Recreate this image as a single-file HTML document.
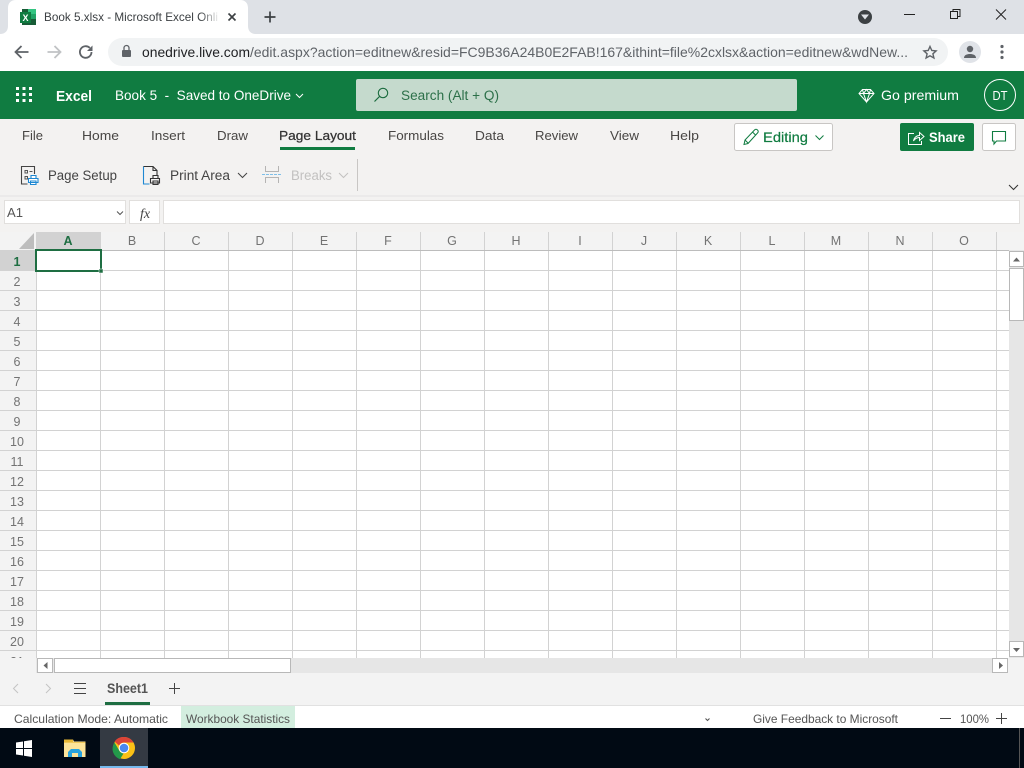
<!DOCTYPE html>
<html><head><meta charset="utf-8"><title>Book 5.xlsx - Microsoft Excel Online</title>
<style>
html,body{margin:0;padding:0;width:1024px;height:768px;overflow:hidden;background:#fff}
svg{display:block}
text{font-family:"Liberation Sans",sans-serif;font-size:13px;fill:#444;white-space:pre}
.hd{font-size:12.5px;fill:#737373;text-anchor:middle}
.rn{font-size:12.5px;fill:#737373;text-anchor:middle}
.tab{font-size:13px;fill:#484644}
</style></head><body>
<svg width="1024" height="768" viewBox="0 0 1024 768" xmlns="http://www.w3.org/2000/svg">
<defs><linearGradient id="fade" x1="0" x2="1"><stop offset="0" stop-color="#fff" stop-opacity="0"/><stop offset="1" stop-color="#fff"/></linearGradient></defs>
<!-- Chrome tab strip -->
<rect width="1024" height="34" fill="#dee1e6"/>
<path d="M0 34C5 34 8 31 8 26V8C8 3 11 0 16 0H240C245 0 248 3 248 8V26C248 31 251 34 256 34Z" fill="#fff"/>
<rect x="22" y="9" width="14" height="16" fill="#185c37"/><rect x="28" y="9" width="8" height="5" fill="#33c481"/><rect x="28" y="14" width="8" height="5" fill="#21a366"/><rect x="20" y="12" width="11" height="11" fill="#107c41"/>
<text x="22.5" y="21" style="font-size:9px;font-weight:bold;fill:#fff">X</text>
<text x="44" y="21" textLength="174" lengthAdjust="spacingAndGlyphs" style="font-size:12px;fill:#3c4043">Book 5.xlsx - Microsoft Excel Onli</text>
<rect x="200" y="8" width="20" height="18" fill="url(#fade)"/>
<path d="M228.500 13.500l7 7m0-7l-7 7" stroke="#3c4043" stroke-width="1.600" fill="none"/>
<path d="M270 11.500v11M264.500 17h11" stroke="#3c4043" stroke-width="1.700" fill="none"/>
<circle cx="865" cy="17" r="7" fill="#3c4043"/><path d="M861 14.500h8l-4 5z" fill="#dee1e6"/>
<path d="M904 14.500h11" stroke="#222" stroke-width="1"/>
<path d="M953 11.500v-2h7v7h-2.500" fill="none" stroke="#222"/><rect x="950.500" y="11.500" width="7" height="7" fill="#dee1e6" stroke="#222"/>
<path d="M996 9.500l10 10m0-10l-10 10" stroke="#222" stroke-width="1" fill="none"/>
<!-- Chrome toolbar -->
<rect y="34" width="1024" height="37" fill="#fff"/>
<path d="M28.500 52H16.500M21.500 46l-6 6 6 6" fill="none" stroke="#5f6368" stroke-width="1.800"/>
<path d="M47.500 52h12M54.500 46l6 6-6 6" fill="none" stroke="#c0c2c5" stroke-width="1.800"/>
<path d="M91.500 52a5.800 5.800 0 1 1-1.700-4.100" fill="none" stroke="#5f6368" stroke-width="1.800"/><path d="M92.500 45.500v5.500h-5.500z" fill="#5f6368"/>
<rect x="108" y="38" width="840" height="28" rx="14" fill="#f1f3f4"/>
<rect x="122" y="50" width="9" height="7" rx="1" fill="#5f6368"/><path d="M124 50v-2a2.500 2.500 0 0 1 5 0v2" fill="none" stroke="#5f6368" stroke-width="1.300"/>
<text x="142" y="57" textLength="108" lengthAdjust="spacingAndGlyphs" style="font-size:14px;fill:#202124">onedrive.live.com</text>
<text x="250" y="57" textLength="658" lengthAdjust="spacingAndGlyphs" style="font-size:14px;fill:#5f6368">/edit.aspx?action=editnew&amp;resid=FC9B36A24B0E2FAB!167&amp;ithint=file%2cxlsx&amp;action=editnew&amp;wdNew...</text>
<path d="M930 46.500l1.800 4 4.300.4-3.200 2.900 1 4.200-3.900-2.200-3.900 2.200 1-4.200-3.200-2.900 4.300-.4z" fill="none" stroke="#5f6368" stroke-width="1.400"/>
<circle cx="970" cy="52" r="11" fill="#e0e3e8"/><circle cx="970" cy="49" r="3.200" fill="#5f6368"/><path d="M964 58c0-3 3-4 6-4s6 1 6 4z" fill="#5f6368"/>
<circle cx="1002" cy="46.500" r="1.600" fill="#5f6368"/><circle cx="1002" cy="52" r="1.600" fill="#5f6368"/><circle cx="1002" cy="57.500" r="1.600" fill="#5f6368"/>
<!-- Excel header -->
<rect y="71" width="1024" height="48" fill="#107c41"/>
<g fill="#fff"><rect x="16" y="87" width="3" height="3"/><rect x="22.500" y="87" width="3" height="3"/><rect x="29" y="87" width="3" height="3"/><rect x="16" y="93" width="3" height="3"/><rect x="22.500" y="93" width="3" height="3"/><rect x="29" y="93" width="3" height="3"/><rect x="16" y="99" width="3" height="3"/><rect x="22.500" y="99" width="3" height="3"/><rect x="29" y="99" width="3" height="3"/></g>
<text x="56" y="101" textLength="36" lengthAdjust="spacingAndGlyphs" style="font-size:15px;font-weight:bold;fill:#fff">Excel</text>
<text x="115" y="100" textLength="176" lengthAdjust="spacingAndGlyphs" style="font-size:14px;fill:#fff">Book 5  -  Saved to OneDrive</text>
<path d="M296 94l3.500 3.500 3.500-3.500" fill="none" stroke="#fff"/>
<rect x="356" y="79" width="441" height="32" rx="2" fill="#c5dacd"/>
<circle cx="383" cy="93" r="4.700" fill="none" stroke="#1b6b3e" stroke-width="1.100"/><path d="M379.500 96.500l-5 5" stroke="#1b6b3e" stroke-width="1.200"/>
<text x="401" y="100" textLength="98" lengthAdjust="spacingAndGlyphs" style="font-size:13.500px;fill:#2c7049">Search (Alt + Q)</text>
<path d="M862.500 89.500h8l3.500 4-7.500 8.500-7.500-8.500zM859 93.500h15M863.500 93.500l3 8.500 3-8.500M862.500 89.500l1 4 3-4 3 4 1-4" fill="none" stroke="#fff" stroke-width="1"/>
<text x="881" y="100" textLength="78" lengthAdjust="spacingAndGlyphs" style="font-size:14px;fill:#fff">Go premium</text>
<circle cx="1000" cy="95" r="15.500" fill="none" stroke="#fff"/>
<text x="992.500" y="100" textLength="15" lengthAdjust="spacingAndGlyphs" style="font-size:12.500px;fill:#fff">DT</text>
<!-- Ribbon -->
<rect y="119" width="1024" height="76" fill="#f3f2f1"/>
<rect y="195" width="1024" height="5" fill="#ebeaea"/>
<rect y="197" width="1024" height="35" fill="#f3f2f1"/>
<text class="tab" x="22" y="140" textLength="21" lengthAdjust="spacingAndGlyphs">File</text>
<text class="tab" x="82" y="140" textLength="37" lengthAdjust="spacingAndGlyphs">Home</text>
<text class="tab" x="151" y="140" textLength="34" lengthAdjust="spacingAndGlyphs">Insert</text>
<text class="tab" x="217" y="140" textLength="31" lengthAdjust="spacingAndGlyphs">Draw</text>
<text class="tab" x="279" y="140" textLength="77" lengthAdjust="spacingAndGlyphs" style="fill:#333;stroke:#333;stroke-width:.25">Page Layout</text>
<rect x="280" y="147" width="75" height="3" fill="#107c41"/>
<text class="tab" x="388" y="140" textLength="56" lengthAdjust="spacingAndGlyphs">Formulas</text>
<text class="tab" x="475" y="140" textLength="29" lengthAdjust="spacingAndGlyphs">Data</text>
<text class="tab" x="535" y="140" textLength="43" lengthAdjust="spacingAndGlyphs">Review</text>
<text class="tab" x="610" y="140" textLength="29" lengthAdjust="spacingAndGlyphs">View</text>
<text class="tab" x="670" y="140" textLength="29" lengthAdjust="spacingAndGlyphs">Help</text>
<rect x="734.500" y="123.500" width="98" height="27" rx="2" fill="#fff" stroke="#c8c6c4"/>
<path d="M744 144.500l1-4.500 9.500-10c1-1 2-1 3 0s1 2 0 3l-9.500 10.500zM745 140l3 3M752.500 132l3 3" fill="none" stroke="#107c41" stroke-width="1"/>
<text x="763" y="142" textLength="45" lengthAdjust="spacingAndGlyphs" style="font-size:14px;fill:#107c41;stroke:#107c41;stroke-width:.2">Editing</text>
<path d="M815.500 135.500l4 4 4-4" fill="none" stroke="#107c41" stroke-width="1"/>
<rect x="900" y="123" width="74" height="28" rx="2" fill="#107c41"/>
<path d="M914 133.500h-5.500v11h13v-3.500M913.500 141c.5-3.500 3-5.500 6-5.500v-3l4.500 4-4.500 4v-3c-2.500 0-4.500 1-6 3.500z" fill="none" stroke="#fff" stroke-width="1"/>
<text x="929" y="142" textLength="36" lengthAdjust="spacingAndGlyphs" style="font-size:14px;font-weight:bold;fill:#fff">Share</text>
<rect x="982.500" y="123.500" width="33" height="27" rx="2" fill="#fff" stroke="#c8c6c4"/>
<path d="M992.500 131.500h13v9.500h-9l-2.500 3v-3h-1.500z" fill="none" stroke="#107c41" stroke-width="1.100"/>
<!-- Ribbon commands -->
<path d="M34.500 174v-7.500H21.500v17.500h6" fill="none" stroke="#444" stroke-width="1.100"/>
<path d="M25 170.500h2.500v2.500H25zM25 176.500h2.500v2.500H25zM29.500 171.500h3" fill="none" stroke="#555"/>
<path d="M31 175.500h5v3h-5zM28.500 178.500h9.500v4h-9.500zM30.500 181h5.500v3.500h-5.500z" fill="#fff" stroke="#1e88d2" stroke-width="1.100"/>
<text x="48" y="180" textLength="69" lengthAdjust="spacingAndGlyphs" style="font-size:13.500px;fill:#444">Page Setup</text>
<path d="M143.500 166.500v17.500h6" fill="none" stroke="#1e88d2" stroke-width="1.100"/><path d="M143.500 166.500h9.500l4 4v4.500M153 166.500v4h4" fill="none" stroke="#333" stroke-width="1.100"/>
<path d="M153 175.500h5v3h-5zM150.500 178.500h9v4.500h-9zM153 181h5v3.500h-5z" fill="#f3f2f1" stroke="#333" stroke-width="1.100"/>
<text x="170" y="180" textLength="60" lengthAdjust="spacingAndGlyphs" style="font-size:13.500px;fill:#444">Print Area</text>
<path d="M238 173l4.500 4.500 4.500-4.500" fill="none" stroke="#444"/>
<path d="M265.500 166v5.500h13V166M265.500 183v-5.500h13v5.500" fill="none" stroke="#b5b4b3" stroke-width="1"/>
<path d="M262 174.500h19" stroke="#7fbfe8" stroke-width="1" stroke-dasharray="3 1"/>
<text x="291" y="180" textLength="41" lengthAdjust="spacingAndGlyphs" style="font-size:13.500px;fill:#c2c1c0">Breaks</text>
<path d="M339 173l4.500 4.500 4.500-4.500" fill="none" stroke="#c2c1c0"/>
<rect x="357" y="159" width="1" height="32" fill="#c8c6c4"/>
<path d="M1009 185l4.500 4.500 4.500-4.500" fill="none" stroke="#333"/>
<!-- Formula bar -->
<rect x="4.500" y="200.500" width="121" height="23" fill="#fff" stroke="#e1dfdd"/>
<text x="7" y="217" textLength="16" lengthAdjust="spacingAndGlyphs" style="font-size:13px;fill:#555">A1</text>
<path d="M117 211.500l3 3 3-3" fill="none" stroke="#555"/>
<rect x="129.500" y="200.500" width="30" height="23" fill="#fff" stroke="#e1dfdd"/>
<text x="140" y="218" style="font-family:'Liberation Serif',serif;font-style:italic;font-size:14px;fill:#444">fx</text>
<rect x="163.500" y="200.500" width="856" height="23" fill="#fff" stroke="#e1dfdd"/>
<!-- Grid -->
<rect y="232" width="1024" height="18" fill="#f3f3f3"/>
<rect y="250" width="36" height="408" fill="#f3f3f3"/>
<rect x="36" y="250" width="973" height="408" fill="#fff"/>
<rect x="36" y="232" width="65" height="18" fill="#d2d2d2"/>
<rect y="250" width="36" height="21" fill="#d2d2d2"/>
<path d="M34 233v16H19z" fill="#bdbdbd"/>
<path fill="none" stroke="#d2d2d2" stroke-width="1" d="M36.500 250V658M100.500 232V658M164.500 232V658M228.500 232V658M292.500 232V658M356.500 232V658M420.500 232V658M484.500 232V658M548.500 232V658M612.500 232V658M676.500 232V658M740.500 232V658M804.500 232V658M868.500 232V658M932.500 232V658M996.500 232V658"/>
<path fill="none" stroke="#d2d2d2" stroke-width="1" d="M0 270.500H1009M0 290.500H1009M0 310.500H1009M0 330.500H1009M0 350.500H1009M0 370.500H1009M0 390.500H1009M0 410.500H1009M0 430.500H1009M0 450.500H1009M0 470.500H1009M0 490.500H1009M0 510.500H1009M0 530.500H1009M0 550.500H1009M0 570.500H1009M0 590.500H1009M0 610.500H1009M0 630.500H1009M0 650.500H1009"/>
<path d="M36 250.500H1009" stroke="#bcbcbc"/>
<text class="hd" x="68" y="245" style="font-weight:bold;fill:#1e6e42">A</text>
<text class="hd" x="132" y="245">B</text><text class="hd" x="196" y="245">C</text><text class="hd" x="260" y="245">D</text><text class="hd" x="324" y="245">E</text><text class="hd" x="388" y="245">F</text><text class="hd" x="452" y="245">G</text><text class="hd" x="516" y="245">H</text><text class="hd" x="580" y="245">I</text><text class="hd" x="644" y="245">J</text><text class="hd" x="708" y="245">K</text><text class="hd" x="772" y="245">L</text><text class="hd" x="836" y="245">M</text><text class="hd" x="900" y="245">N</text><text class="hd" x="964" y="245">O</text>
<text class="rn" x="17" y="266" style="font-weight:bold;fill:#1e6e42">1</text>
<text class="rn" x="17" y="286">2</text><text class="rn" x="17" y="306">3</text><text class="rn" x="17" y="326">4</text><text class="rn" x="17" y="346">5</text><text class="rn" x="17" y="366">6</text><text class="rn" x="17" y="386">7</text><text class="rn" x="17" y="406">8</text><text class="rn" x="17" y="426">9</text><text class="rn" x="17" y="446">10</text><text class="rn" x="17" y="466">11</text><text class="rn" x="17" y="486">12</text><text class="rn" x="17" y="506">13</text><text class="rn" x="17" y="526">14</text><text class="rn" x="17" y="546">15</text><text class="rn" x="17" y="566">16</text><text class="rn" x="17" y="586">17</text><text class="rn" x="17" y="606">18</text><text class="rn" x="17" y="626">19</text><text class="rn" x="17" y="646">20</text><text class="rn" x="17" y="666">21</text>
<rect x="36" y="250" width="65" height="21" fill="none" stroke="#1e6e42" stroke-width="2"/>
<rect x="99" y="269" width="4" height="4" fill="#1e6e42" stroke="#fff" stroke-width=".5"/>
<!-- Scrollbars -->
<rect x="1009" y="250" width="15" height="408" fill="#e6e6e6"/>
<rect x="1009.500" y="251.500" width="14" height="15" fill="#fff" stroke="#b8b8b8"/>
<path d="M1013 261.500l3.500-4 3.500 4z" fill="#666"/>
<rect x="1009.500" y="268.500" width="14" height="52" fill="#fff" stroke="#b8b8b8"/>
<rect x="1009.500" y="641.500" width="14" height="15" fill="#fff" stroke="#b8b8b8"/>
<path d="M1013 648l3.500 4 3.500-4z" fill="#666"/>
<rect y="658" width="36" height="15" fill="#f3f3f3"/>
<rect x="36" y="658" width="973" height="15" fill="#e6e6e6"/>
<rect x="37.500" y="658.500" width="15" height="14" fill="#fff" stroke="#b8b8b8"/>
<path d="M47.500 662l-4 3.500 4 3.500z" fill="#666"/>
<rect x="54.500" y="658.500" width="236" height="14" fill="#fff" stroke="#b8b8b8"/>
<rect x="992.500" y="658.500" width="15" height="14" fill="#fff" stroke="#b8b8b8"/>
<path d="M999 662l4 3.500-4 3.500z" fill="#666"/>
<!-- Sheet tabs -->
<rect y="673" width="1024" height="32" fill="#f3f3f3"/>
<rect x="1008" y="658" width="16" height="15" fill="#f3f3f3"/>
<path d="M18 684l-4.500 4.500 4.500 4.500M46 684l4.500 4.500-4.500 4.500" fill="none" stroke="#c4c4c4"/>
<path d="M74 683.500h12M74 688.500h12M74 693.500h12" stroke="#444"/>
<text x="107" y="693" textLength="41" lengthAdjust="spacingAndGlyphs" style="font-size:13.500px;font-weight:bold;fill:#555">Sheet1</text>
<rect x="105" y="702" width="45" height="3" fill="#1e6e42"/>
<path d="M174.500 683v11M169 688.500h11" stroke="#444"/>
<path d="M0 705.500H1024" stroke="#e1e1e1"/>
<!-- Status bar -->
<rect y="706" width="1024" height="22" fill="#fff"/>
<text x="14" y="723" textLength="154" lengthAdjust="spacingAndGlyphs" style="font-size:12px;fill:#555">Calculation Mode: Automatic</text>
<rect x="181" y="706" width="114" height="22" fill="#d3eedf"/>
<text x="186" y="723" textLength="104" lengthAdjust="spacingAndGlyphs" style="font-size:12px;fill:#555">Workbook Statistics</text>
<path d="M705.500 718.500l2 2 2-2" fill="none" stroke="#555" stroke-width="1.100"/>
<text x="753" y="723" textLength="145" lengthAdjust="spacingAndGlyphs" style="font-size:12px;fill:#555">Give Feedback to Microsoft</text>
<path d="M940 718.500h11M996 718.500h11M1001.500 713v11" stroke="#444"/>
<text x="960" y="723" textLength="29" lengthAdjust="spacingAndGlyphs" style="font-size:12px;fill:#555">100%</text>
<!-- Taskbar -->
<rect y="728" width="1024" height="40" fill="#010a14"/>
<path d="M16 742.500l7-1v6.500h-7zM24 741.300l8-1.300v8h-8zM16 749h7v6.500l-7-1zM24 749h8v8l-8-1.300z" fill="#fff"/>
<path d="M64 739.500h9l1 2h11.500v15.500H64z" fill="#fde49a"/><path d="M64 739.500h9v2.500h-9z" fill="#e8b836"/><path d="M64 742h21.500v1H64z" fill="#f0c85a"/>
<path d="M68 757v-5l3-3h8l3 3v5h-4v-4h-6v4z" fill="#29a3dd"/>
<rect x="100" y="728" width="48" height="40" fill="#343a43"/>
<rect x="100" y="766" width="48" height="2" fill="#76b9ed"/>
<circle cx="124" cy="748" r="11" fill="#fbc116"/>
<path d="M124 737a11 11 0 0 1 9.500 5.500H124a5.500 5.500 0 0 0-5 3l-4.500-4A11 11 0 0 1 124 737z" fill="#db4437"/>
<path d="M114.500 742.500l5 8.500a5.500 5.500 0 0 0 4 2.500l-3.500 5.700A11 11 0 0 1 114.500 742.500z" fill="#23994a"/>
<circle cx="124" cy="748" r="5.300" fill="#fff"/><circle cx="124" cy="748" r="4.300" fill="#4a88ee"/>
<rect x="1019" y="728" width="1" height="40" fill="#555"/>
</svg>
</body></html>
